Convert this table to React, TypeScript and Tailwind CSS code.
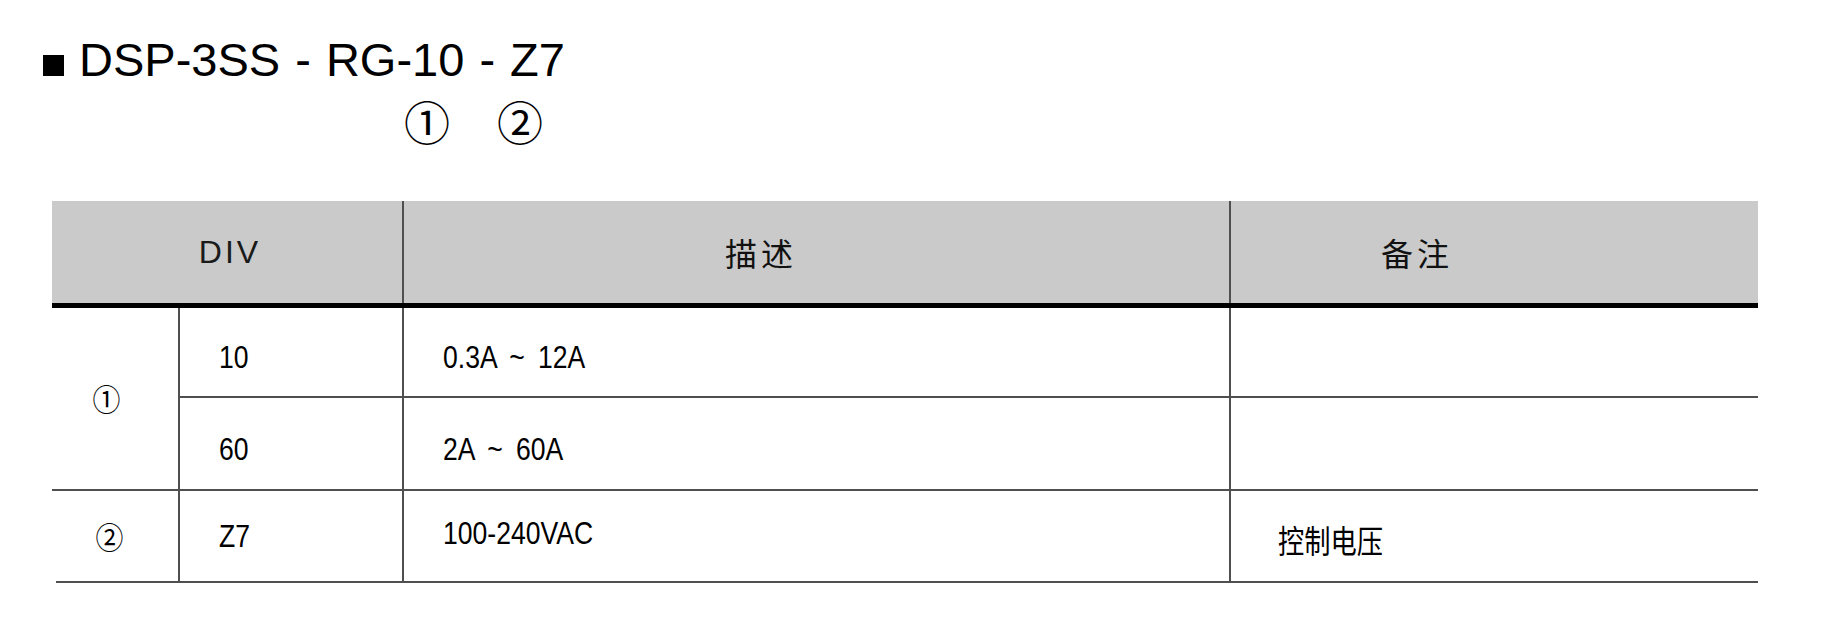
import React from "react";

const narrow = "inline-block origin-left scale-x-[0.83] whitespace-nowrap [word-spacing:7px]";
const cjk = "font-['Noto_Sans_CJK_SC',sans-serif]";
const line = "border-[#4f4f4f]";

export default function App() {
  return (
    <div className="w-[1829px] h-[640px] bg-white text-black font-['Liberation_Sans',Arial,sans-serif] overflow-hidden">
      <div className="h-[201px] flex flex-col">
        <div className="pt-[36px] pl-[43px] flex items-baseline">
          <span className="w-[21px] h-[21px] bg-black mr-[15px] shrink-0" />
          <span className="text-[47px] leading-none whitespace-pre [word-spacing:2px]">DSP-3SS - RG-10 - Z7</span>
        </div>
        <div className={`flex pl-[404px] mt-[14px] text-[46px] leading-none ${cjk}`}>
          <span className="w-[93px]">①</span>
          <span>②</span>
        </div>
      </div>

      <div className="ml-[52px] w-[1706px] grid grid-cols-[128px_224px_827px_527px]">
        {/* header */}
        <div className={`col-span-2 h-[102px] bg-[#c9cac9] border-r-2 ${line} flex items-center justify-center pl-[6px] text-[32px] tracking-[3px] text-[#1a1a1a]`}>
          DIV
        </div>
        <div className={`h-[102px] bg-[#c9cac9] border-r-2 ${line} flex items-center pl-[321px] text-[32px] tracking-[4px] text-[#111] ${cjk}`}>
          描述
        </div>
        <div className={`h-[102px] bg-[#c9cac9] flex items-center pl-[150px] text-[32px] tracking-[4px] text-[#111] ${cjk}`}>
          备注
        </div>
        <div className="col-span-4 h-[5px] bg-black" />

        {/* row 1 & 2 */}
        <div className={`row-span-2 border-r-2 border-b-2 ${line} flex items-center justify-center pr-[17px] text-[31px] ${cjk}`}>
          <span className="inline-block scale-x-[0.9]">①</span>
        </div>
        <div className={`h-[90px] border-r-2 border-b-2 ${line} flex items-center pl-[39px] pt-[9px] text-[32px] leading-none`}>
          <span className={narrow}>10</span>
        </div>
        <div className={`h-[90px] border-r-2 border-b-2 ${line} flex items-center pl-[39px] pt-[9px] text-[32px] leading-none`}>
          <span className={narrow}>0.3A ~ 12A</span>
        </div>
        <div className={`h-[90px] border-b-2 ${line}`} />

        <div className={`h-[93px] border-r-2 border-b-2 ${line} flex items-center pl-[39px] pt-[10px] text-[32px] leading-none`}>
          <span className={narrow}>60</span>
        </div>
        <div className={`h-[93px] border-r-2 border-b-2 ${line} flex items-center pl-[39px] pt-[10px] text-[32px] leading-none`}>
          <span className={narrow}>2A ~ 60A</span>
        </div>
        <div className={`h-[93px] border-b-2 ${line}`} />

        {/* row 3 */}
        <div className={`h-[92px] border-r-2 ${line} flex flex-col`}>
          <div className={`flex-1 flex items-center justify-center pr-[12px] text-[31px] ${cjk}`}>
            <span className="inline-block scale-x-[0.9]">②</span>
          </div>
          <div className="h-[2px] ml-[4px] bg-[#4f4f4f]" />
        </div>
        <div className={`h-[92px] border-r-2 border-b-2 ${line} flex items-center pl-[39px] text-[32px] leading-none`}>
          <span className={narrow}>Z7</span>
        </div>
        <div className={`h-[92px] border-r-2 border-b-2 ${line} flex items-center pl-[39px] pb-[6px] text-[32px] leading-none`}>
          <span className={narrow}>100-240VAC</span>
        </div>
        <div className={`h-[92px] border-b-2 ${line} flex items-center pl-[47px] pt-[6px] text-[32px] leading-none ${cjk}`}>
          <span className="inline-block origin-left scale-x-[0.82] whitespace-nowrap">控制电压</span>
        </div>
      </div>
    </div>
  );
}
